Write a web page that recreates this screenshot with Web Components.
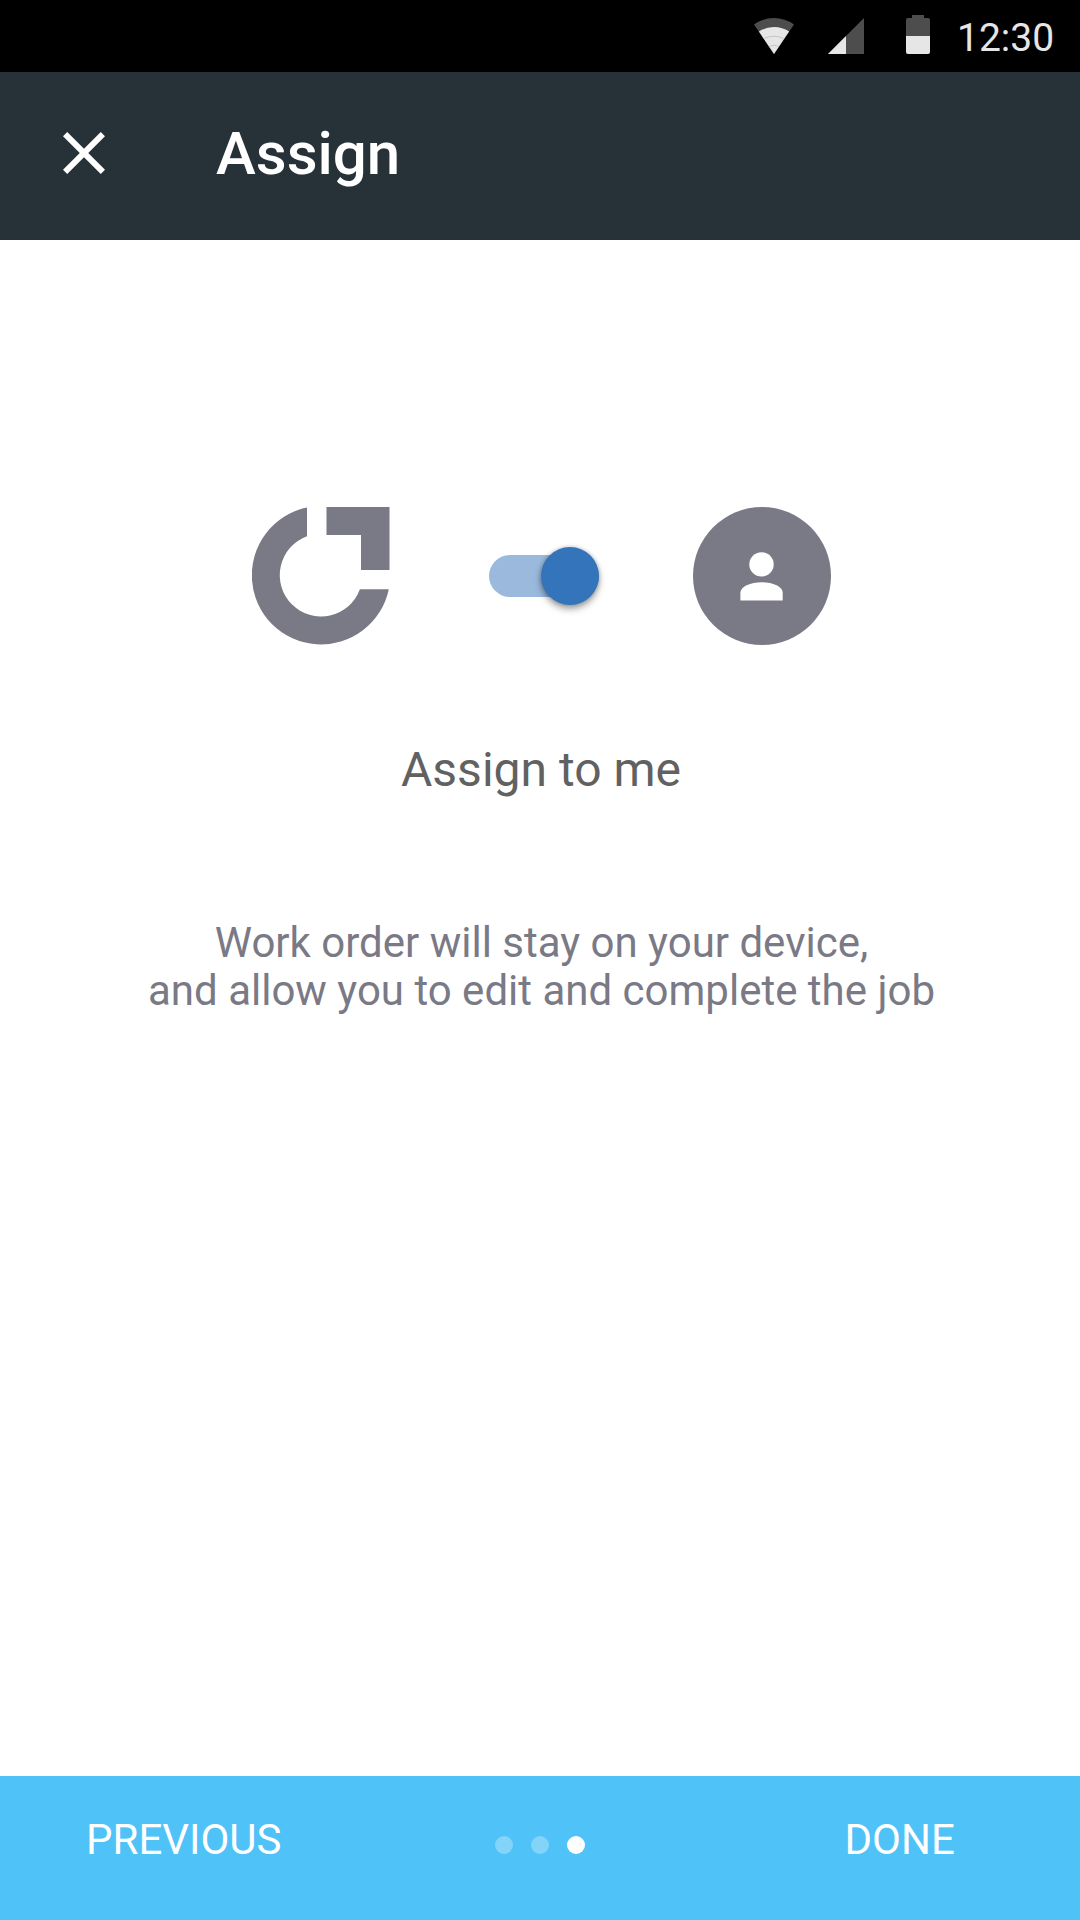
<!DOCTYPE html>
<html lang="en">
<head>
<meta charset="utf-8">
<title>Assign</title>
<style>
html,body{margin:0;height:100%;background:#fff}
body{font-family:Roboto,sans-serif}
</style>
</head>
<body>
<assign-screen></assign-screen>
<script>
const define=(name,html)=>{
  const t=document.createElement('template');
  t.innerHTML=html;
  customElements.define(name,class extends HTMLElement{
    constructor(){super();this.attachShadow({mode:'open'}).append(t.content.cloneNode(true));}
  });
};

define('status-bar',`<style>
:host{display:flex;box-sizing:border-box;height:72px;background:#000;color:#e6e6e6;align-items:flex-start;justify-content:flex-end;padding-right:25.9px}
svg{display:block}
.icons{display:flex;height:72px}
.time{font-size:39px;line-height:46px;padding-top:15px;white-space:nowrap;width:97.1px;margin-left:27px}
</style>
<div class="icons"><svg width="176" height="72" viewBox="754 0 176 72">
<path fill="#4d4d4d" d="M774 54L754 24.5Q763 18 774 18T794 24.5Z"/>
<path fill="#e6e6e6" d="M774 54L758.9 31.6Q765.500 27 774 27T789.1 31.6Z"/>
<path fill="none" stroke="#bdbdbd" stroke-width=".8" d="M764.500 38.300Q769 36.300 774 36.300T783.500 38.300M769.500 46.500Q771.500 45.300 774 45.300T778.500 46.500"/>
<path fill="#4d4d4d" d="M864 18V54H828Z"/>
<path fill="#e6e6e6" d="M828 54L846 36V54Z"/>
<path fill="#4d4d4d" d="M912 15H924V18H928Q930 18 930 20V36H906V20Q906 18 908 18H912Z"/>
<path fill="#e6e6e6" d="M906 36H930V52Q930 54 928 54H908Q906 54 906 52Z"/>
</svg></div>
<div class="time"><slot></slot></div>`);

define('app-bar',`<style>
:host{display:flex;box-sizing:border-box;height:168px;background:#273238;color:#fff;padding:45px 48px 0;align-items:flex-start}
svg{display:block;width:72px;height:72px;flex:none}
h1{margin:1px 0 0 96px;font-size:60px;line-height:71px;font-weight:500}
</style>
<svg viewBox="0 0 24 24" fill="#fff"><path d="M19 6.410L17.590 5 12 10.590 6.410 5 5 6.410 10.590 12 5 17.590 6.410 19 12 13.410 17.590 19 19 17.590 13.410 12Z"/></svg>
<h1><slot></slot></h1>`);

define('company-mark',`<style>:host{display:block;width:138px;height:138px}svg{display:block}</style>
<svg width="138" height="138" viewBox="252 507 138 138" fill="#7a7986">
<path d="M307 507.500V536.300A41.300 41.300 0 1 0 359.900 589.200H388.800A69.200 69.200 0 1 1 307 507.500Z"/>
<path d="M326.500 507H389.500V570H361V535H326.500Z"/>
</svg>`);

define('user-avatar',`<style>:host{display:block;width:138px;height:138px}svg{display:block}</style>
<svg width="138" height="138" viewBox="693 507 138 138">
<circle cx="762" cy="576" r="69" fill="#7a7986"/>
<circle cx="761.500" cy="564.400" r="12.200" fill="#fff"/>
<path fill="#fff" d="M740.400 600.400V592.500C740.400 586.500 750.500 582.200 761.600 582.200S782.700 586.500 782.700 592.500V600.400Z"/>
</svg>`);

define('toggle-switch',`<style>
:host{display:flex;align-items:center;width:110.4px;height:58.600px}
.track{width:110.4px;height:42px;border-radius:21px;background:#9ab9dd;display:flex;align-items:center;justify-content:flex-end}
.thumb{width:58.600px;height:58.600px;border-radius:50%;background:#3474bb;flex:none;box-shadow:0 4px 7px rgba(0,0,0,.36),0 0 4px rgba(0,0,0,.2)}
</style>
<div class="track"><div class="thumb"></div></div>`);

define('assign-panel',`<style>
:host{display:flex;flex-direction:column;flex:1;padding-top:267px;background:#fff}
.row{display:flex;align-items:center;justify-content:center;height:138px;padding-left:3px}
toggle-switch{margin:0 93.6px 0 99px}
.label{margin-top:96px;font-size:48px;line-height:57px;color:#616161;text-align:center;padding-left:2px}
.text{margin-top:120px;display:flex;flex-direction:column;font-size:42px;color:#7a7986;text-align:center;padding-left:3px}
::slotted(div){height:48px;line-height:49px;white-space:nowrap}
</style>
<div class="row"><company-mark></company-mark><toggle-switch></toggle-switch><user-avatar></user-avatar></div>
<div class="label"><slot name="label"></slot></div>
<div class="text"><slot></slot></div>`);

define('page-dots',`<style>
:host{display:flex;gap:18px}
i{width:18px;height:18px;border-radius:50%;background:rgba(255,255,255,.3)}
i.on{background:#fff}
</style><i></i><i></i><i class="on"></i>`);

define('step-bar',`<style>
:host{display:flex;box-sizing:border-box;height:144px;background:#4fc2f8;color:#fff;padding:39px 125.2px 0 86px;align-items:flex-start;font-size:42px;line-height:49px}
page-dots{margin:21px auto 0 213.5px}
</style>
<slot name="previous"></slot><page-dots></page-dots><slot name="next"></slot>`);

define('assign-screen',`<style>
:host{display:flex;flex-direction:column;width:1080px;height:1920px;overflow:hidden}
status-bar,app-bar,step-bar{flex:none}
</style>
<status-bar>12:30</status-bar>
<app-bar>Assign</app-bar>
<assign-panel><span slot="label">Assign to me</span><div>Work order will stay on your device,</div><div>and allow you to edit and complete the job</div></assign-panel>
<step-bar><span slot="previous">PREVIOUS</span><span slot="next">DONE</span></step-bar>`);
</script>
</body>
</html>
